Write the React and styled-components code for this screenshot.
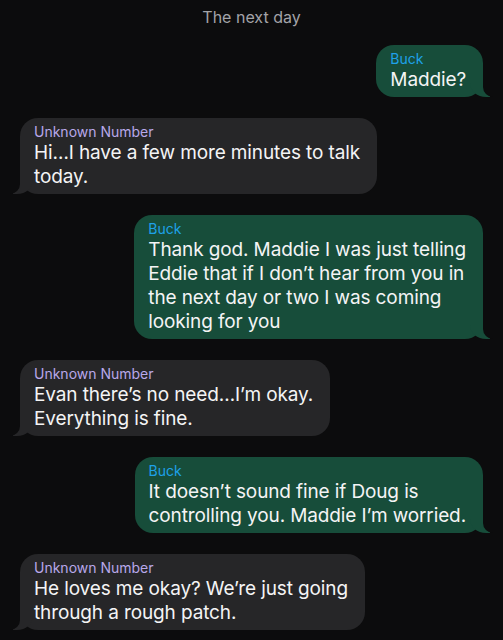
import React from 'react';
import styled, { createGlobalStyle } from 'styled-components';

const GlobalStyle = createGlobalStyle`
  html, body {
    margin: 0;
    padding: 0;
    background: #0c0c0d;
  }
  body {
    font-family: Inter, "Noto Sans", "Liberation Sans", sans-serif;
    -webkit-font-smoothing: antialiased;
  }
`;

const Screen = styled.div`
  width: 503px;
  height: 640px;
  overflow: hidden;
  background: #0c0c0d;
  display: flex;
  flex-flow: column nowrap;
  padding: 6px 0 0;
  box-sizing: border-box;
`;

const DayLabel = styled.div`
  text-align: center;
  color: #a3a3a8;
  font-size: 16px;
  line-height: 22px;
  margin-bottom: 17px;
`;

const Thread = styled.div`
  display: flex;
  flex-flow: column nowrap;
  gap: 21px;
`;

const Row = styled.div`
  display: flex;
  justify-content: ${(props) => (props.mine ? 'flex-end' : 'flex-start')};
  padding: 0 20px;
`;

const Bubble = styled.div`
  position: relative;
  background: ${(props) => (props.mine ? '#174d3a' : '#262628')};
  border-radius: 18px;
  padding: 5px 17px 5px 14px;
  color: #f4f4f5;
  z-index: 0;

  &::before,
  &::after {
    content: "";
    position: absolute;
    bottom: 0;
    height: 22px;
    z-index: -1;
  }

  &::before {
    width: 20px;
    background: ${(props) => (props.mine ? '#174d3a' : '#262628')};
    ${(props) => (props.mine
    ? 'right: -7px; border-bottom-left-radius: 16px 14px;'
    : 'left: -7px; border-bottom-right-radius: 16px 14px;')}
  }

  &::after {
    width: 26px;
    background: #0c0c0d;
    ${(props) => (props.mine
    ? 'right: -26px; border-bottom-left-radius: 10px;'
    : 'left: -26px; border-bottom-right-radius: 10px;')}
  }
`;

const Sender = styled.div`
  font-size: 14px;
  line-height: 18px;
  color: ${(props) => (props.mine ? '#1ea1e8' : '#b8a8ea')};
  white-space: nowrap;
`;

const Line = styled.div`
  font-size: 19px;
  line-height: 24px;
  letter-spacing: -0.12px;
  white-space: nowrap;
`;

const messages = [
  { mine: true, lines: ['Maddie?'] },
  { mine: false, lines: ['Hi\u2026I have a few more minutes to talk', 'today.'] },
  {
    mine: true,
    lines: [
      'Thank god. Maddie I was just telling',
      'Eddie that if I don\u2019t hear from you in',
      'the next day or two I was coming',
      'looking for you',
    ],
  },
  { mine: false, lines: ['Evan there\u2019s no need\u2026I\u2019m okay.', 'Everything is fine.'] },
  { mine: true, lines: ['It doesn\u2019t sound fine if Doug is', 'controlling you. Maddie I\u2019m worried.'] },
  { mine: false, lines: ['He loves me okay? We\u2019re just going', 'through a rough patch.'] },
];

const App = () => (
  <Screen>
    <GlobalStyle />
    <DayLabel>The next day</DayLabel>
    <Thread>
      {messages.map((msg, i) => (
        <Row mine={msg.mine} key={i}>
          <Bubble mine={msg.mine}>
            <Sender mine={msg.mine}>{msg.mine ? 'Buck' : 'Unknown Number'}</Sender>
            {msg.lines.map((l) => <Line key={l}>{l}</Line>)}
          </Bubble>
        </Row>
      ))}
    </Thread>
  </Screen>
);

export default App;
